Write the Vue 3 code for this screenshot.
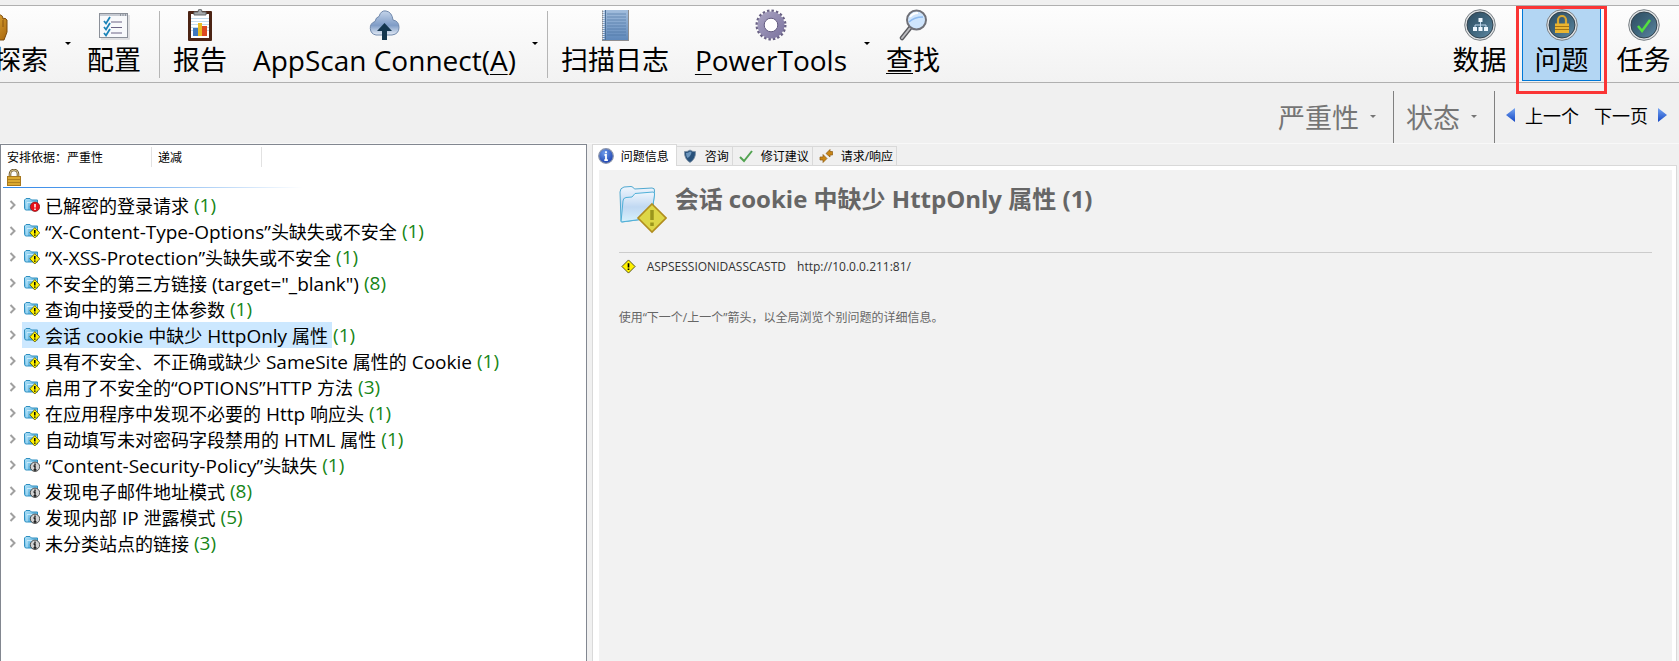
<script setup>
import { ref } from "vue";

const tools = [
    { id: "explore", icon: "hand", label: "探索", menu: true, clipped: true },
    { id: "config", icon: "config", label: "配置", separator: true },
    { id: "report", icon: "report", label: "报告" },
    { id: "connect", icon: "cloud", label: "AppScan Connect(", key: "A", tail: ")", menu: true, separator: true, latin: true },
    { id: "log", icon: "log", label: "扫描日志" },
    { id: "power", icon: "gear", label: "", key: "P", tail: "owerTools", menu: true, latin: true },
    { id: "find", icon: "search", label: "", key: "查", tail: "找" },
];

const views = [
    { id: "data", label: "数据" },
    { id: "issues", label: "问题" },
    { id: "tasks", label: "任务" },
];

const issues = [
    { title: "已解密的登录请求", count: 1, level: "high" },
    { title: "“X-Content-Type-Options”头缺失或不安全", count: 1, level: "low" },
    { title: "“X-XSS-Protection”头缺失或不安全", count: 1, level: "low" },
    { title: "不安全的第三方链接 (target=\"_blank\")", count: 8, level: "low" },
    { title: "查询中接受的主体参数", count: 1, level: "low" },
    { title: "会话 cookie 中缺少 HttpOnly 属性", count: 1, level: "low" },
    { title: "具有不安全、不正确或缺少 SameSite 属性的 Cookie", count: 1, level: "low" },
    { title: "启用了不安全的“OPTIONS”HTTP 方法", count: 3, level: "low" },
    { title: "在应用程序中发现不必要的 Http 响应头", count: 1, level: "low" },
    { title: "自动填写未对密码字段禁用的 HTML 属性", count: 1, level: "low" },
    { title: "“Content-Security-Policy”头缺失", count: 1, level: "info" },
    { title: "发现电子邮件地址模式", count: 8, level: "info" },
    { title: "发现内部 IP 泄露模式", count: 5, level: "info" },
    { title: "未分类站点的链接", count: 3, level: "info" },
];

const tabs = [
    { id: "info", label: "问题信息" },
    { id: "advisory", label: "咨询" },
    { id: "fix", label: "修订建议" },
    { id: "traffic", label: "请求/响应" },
];

const activeView = ref("issues");
const activeTab = ref("info");
const selected = ref(5);

// Latin runs are set one size larger than the Chinese around them
const splitRuns = (text) =>
    (text.match(/[\u3001\u4e00-\u9fff]+|[^\u3001\u4e00-\u9fff]+/g) || []).map((run) => ({
        text: run,
        latin: !/[\u3001\u4e00-\u9fff]/.test(run),
    }));
</script>

<template>
    <div class="app">
        <svg class="sprite" aria-hidden="true">
            <defs>
                <linearGradient id="g-gold" x1="0" y1="0" x2="1" y2="1">
                    <stop offset="0" stop-color="#f0bd45" />
                    <stop offset="1" stop-color="#a8660c" />
                </linearGradient>
                <linearGradient id="g-cloud" x1="0" y1="0" x2="0" y2="1">
                    <stop offset="0" stop-color="#c4d4ea" />
                    <stop offset="0.6" stop-color="#7f9cc6" />
                    <stop offset="1" stop-color="#e3ebf6" />
                </linearGradient>
                <linearGradient id="g-book" x1="0" y1="0" x2="0" y2="1">
                    <stop offset="0" stop-color="#a3bedd" />
                    <stop offset="1" stop-color="#5f88ba" />
                </linearGradient>
                <linearGradient id="g-gear" x1="0" y1="0" x2="1" y2="1">
                    <stop offset="0" stop-color="#a59fbf" />
                    <stop offset="1" stop-color="#8078a2" />
                </linearGradient>
                <linearGradient id="g-ball" x1="0" y1="0" x2="1" y2="1">
                    <stop offset="0" stop-color="#2d4c60" />
                    <stop offset="0.5" stop-color="#3f657c" />
                    <stop offset="1" stop-color="#5f8ba5" />
                </linearGradient>
                <linearGradient id="g-folder" x1="0" y1="0" x2="1" y2="1">
                    <stop offset="0" stop-color="#b5e4fa" />
                    <stop offset="1" stop-color="#2f9bd3" />
                </linearGradient>
                <linearGradient id="g-bigfolder" x1="0" y1="0" x2="0" y2="1">
                    <stop offset="0" stop-color="#f0f6fd" />
                    <stop offset="0.5" stop-color="#c0d8f2" />
                    <stop offset="1" stop-color="#d6f0fc" />
                </linearGradient>
                <linearGradient id="g-arrow" x1="0" y1="0" x2="0" y2="1">
                    <stop offset="0" stop-color="#76a5f2" />
                    <stop offset="1" stop-color="#1548c4" />
                </linearGradient>
                <radialGradient id="g-info" cx="0.4" cy="0.3" r="0.8">
                    <stop offset="0" stop-color="#6d9bea" />
                    <stop offset="1" stop-color="#1236a8" />
                </radialGradient>
            </defs>

            <symbol id="i-hand" viewBox="0 0 32 32">
                <path d="M6 16V8q0-3 3-3t3 3V5q0-3 3-3t3 3v3q1-3 3.500-2t2.500 3v1q2-2 4 1v12l-3 8H12L5 23z" fill="url(#g-gold)" stroke="#7d4a0a" />
                <path d="M12 8v8M18 8v8M24 11v7" stroke="#8a540e" fill="none" />
            </symbol>
            <symbol id="i-config" viewBox="0 0 32 32">
                <path d="M3 30h28V6" fill="none" stroke="#d8d8da" stroke-width="1.500" />
                <rect x="1.500" y="4.500" width="28" height="24" fill="#f8f9fb" stroke="#8b9099" />
                <path d="M2 6h27" stroke="#c6cad2" stroke-width="2" />
                <path d="M22 6h1M24.500 6h1M27 6h1" stroke="#59606b" />
                <path d="M13 13h11M13 18.500h11M13 24h11" stroke="#6c6485" />
                <path d="M6 12l2 2.500L12 8M6 18l2 2.500 4-6.500M6 24l2 2.500 4-6.500" fill="none" stroke="#1b83b8" stroke-width="1.800" />
            </symbol>
            <symbol id="i-report" viewBox="0 0 32 32">
                <rect x="4" y="2" width="24" height="30" rx="1" fill="#4c2414" />
                <rect x="7" y="5" width="18" height="24" fill="#fff" />
                <path d="M7 9.500h18M7 12.500h18M7 15.500h18M7 18.500h18M7 21.500h18" stroke="#c4dced" />
                <path d="M10 6V3h4q0-3 2-3t2 3h4v3z" fill="#a5a8aa" stroke="#65696b" />
                <rect x="9" y="19" width="5" height="8" fill="#3f78be" />
                <rect x="14" y="14" width="4" height="13" fill="#e8bc25" />
                <rect x="18" y="17" width="5" height="10" fill="#dd4a21" />
            </symbol>
            <symbol id="i-cloud" viewBox="0 0 32 32">
                <path d="M8 26a7 7 0 0 1-1-13.500Q8 8 11 7.500 13 1 18 2q6 1 7 9 6 1 6 7.500T24 26z" fill="url(#g-cloud)" stroke="#7189ac" />
                <path d="M14 31V22h-5l7.500-8L24 22h-5v9z" fill="#15374f" />
            </symbol>
            <symbol id="i-log" viewBox="0 0 32 32">
                <rect x="3" y="1" width="27" height="31" fill="#8e8e90" />
                <rect x="4" y="1" width="25" height="30" fill="url(#g-book)" />
                <path d="M8 5h19M8 8h19M8 11h19M8 14h19M8 17h19M8 20h19M8 23h19M8 26h19" stroke="#466e9f" stroke-width="0.600" />
                <path d="M4.500 1v30" stroke="#e9eef5" stroke-width="2" stroke-dasharray="1 1" />
                <path d="M6.500 1v30" stroke="#4e7096" />
            </symbol>
            <symbol id="i-gear" viewBox="0 0 32 32">
                <circle cx="16" cy="16" r="14" fill="none" stroke="#696184" stroke-width="3" stroke-dasharray="2.400 2" />
                <circle cx="16" cy="16" r="10" fill="none" stroke="url(#g-gear)" stroke-width="7" />
                <circle cx="16" cy="16" r="6.800" fill="#fff" stroke="#635b80" />
            </symbol>
            <symbol id="i-search" viewBox="0 0 32 32">
                <path d="M13 19L5 29" stroke="#58585c" stroke-width="4.500" stroke-linecap="round" />
                <path d="M13 19L5 29" stroke="#bdbdc0" stroke-width="2" stroke-linecap="round" />
                <circle cx="19.500" cy="11" r="9.500" fill="#cfe5fc" stroke="#707178" stroke-width="2" />
                <path d="M12 13q5-5 14-5" fill="none" stroke="#8dbaf0" stroke-width="1.500" />
                <path d="M13 8q3-4 8-4" fill="none" stroke="#fff" stroke-width="2" />
            </symbol>

            <symbol id="i-ball" viewBox="0 0 32 32">
                <circle cx="16" cy="16" r="15.300" fill="#dfe2e4" stroke="#777e83" />
                <circle cx="16" cy="16" r="13" fill="url(#g-ball)" stroke="#33434e" />
            </symbol>
            <symbol id="i-data" viewBox="0 0 32 32">
                <use href="#i-ball" />
                <path d="M16.500 11v4M11 20v-4h11v4M16.500 15v5" fill="none" stroke="#bfd7ed" />
                <path d="M14.500 9h4v4h-4zM9 18h4v4H9zM14.500 18h4v4h-4zM20 18h4v4h-4z" fill="#eef7ff" />
            </symbol>
            <symbol id="i-issues" viewBox="0 0 32 32">
                <use href="#i-ball" />
                <path d="M12 15v-4a4 4 0 0 1 8 0v4" fill="none" stroke="#d9a72f" stroke-width="2.200" />
                <rect x="9" y="14.500" width="14" height="9.500" fill="#eab531" />
                <path d="M9 17.500h14M9 20.500h14" stroke="#a37313" />
            </symbol>
            <symbol id="i-tasks" viewBox="0 0 32 32">
                <use href="#i-ball" />
                <path d="M10 17l4 5 8-11" fill="none" stroke="#54e03f" stroke-width="2.500" />
            </symbol>

            <symbol id="i-lock" viewBox="0 0 14 18">
                <path d="M3 9V5a4 4 0 0 1 8 0v4" fill="none" stroke="#6d5b35" stroke-width="2.600" />
                <path d="M3 9V5a4 4 0 0 1 8 0v4" fill="none" stroke="#d6c18a" stroke-width="1" />
                <rect x="0.500" y="7.500" width="13" height="9" fill="#dba931" stroke="#a8781c" />
                <path d="M1 10.500h12M1 13.500h12" stroke="#b08120" />
            </symbol>

            <symbol id="i-folder" viewBox="0 0 16 16">
                <path d="M0.500 11.500V3L2 1.500h4L7.500 3h6v10h-12z" fill="url(#g-folder)" stroke="#2f8fc0" />
                <path d="M3 12.500V5.500h10" fill="none" stroke="#d8f2fe" stroke-width="0.800" />
            </symbol>
            <symbol id="i-high" viewBox="0 0 16 16">
                <use href="#i-folder" />
                <circle cx="11" cy="9.800" r="4.700" fill="#e8101a" stroke="#7c1010" stroke-width="0.700" />
                <path d="M11 7v3.500M11 11.500v1.500" stroke="#fff" stroke-width="1.500" />
            </symbol>
            <symbol id="i-low" viewBox="0 0 16 16">
                <use href="#i-folder" />
                <path d="M10.800 4.600L15.800 9.800 10.800 15 5.800 9.800z" fill="#fff200" stroke="#4f4a09" stroke-width="0.800" />
                <path d="M10.800 7v3.500M10.800 11.500v1.300" stroke="#000" stroke-width="1.500" />
            </symbol>
            <symbol id="i-info" viewBox="0 0 16 16">
                <use href="#i-folder" />
                <circle cx="11" cy="9.800" r="4.700" fill="#d2d2d2" stroke="#444" stroke-width="0.900" />
                <path d="M11 6.500V8M9.500 9H11v4M9.500 13h3" fill="none" stroke="#111" stroke-width="1.300" />
            </symbol>

            <symbol id="t-info" viewBox="0 0 16 16">
                <circle cx="8" cy="8" r="7.300" fill="url(#g-info)" stroke="#8b95ab" stroke-width="1.200" />
                <path d="M8 3.200v2M6.500 7H8v5M6.300 12.200h3.600" fill="none" stroke="#fff" stroke-width="1.800" />
            </symbol>
            <symbol id="t-advisory" viewBox="0 0 16 16">
                <path d="M8 2q3 2 5.500 1.500Q14 11 8 14.500 2 11 2.500 3.500 5 4 8 2z" fill="#28517a" stroke="#7c8fa3" stroke-width="0.800" />
                <path d="M8 3.500q-2 1.500-4 1.500 0 3 1.500 5Q9 8 9.500 4z" fill="#6d96bd" />
            </symbol>
            <symbol id="t-fix" viewBox="0 0 16 16">
                <path d="M2 9l4 4 8-10" fill="none" stroke="#52a351" stroke-width="2" />
            </symbol>
            <symbol id="t-traffic" viewBox="0 0 16 16">
                <path d="M2 9h3V6.500L9 10.500 5 14.500V12H2z" fill="#c98616" stroke="#8c5a0e" stroke-width="0.700" />
                <path d="M14.500 3.500h-2.500V1.500L8 5.500l4 3.500V7h2.500z" fill="#c98616" stroke="#8c5a0e" stroke-width="0.700" />
            </symbol>

            <symbol id="i-bigfolder" viewBox="0 0 48 48">
                <path d="M2 35L1 6q0-4 4-5l7-.500q2 0 3.500 2.500L33 2q3 0 2.500 3L33 32 3 36z" fill="url(#g-bigfolder)" stroke="#51a9d0" />
                <path d="M2 36L4 15q0-3 3-3.500l6-.500 3-3.500L34 6q2 0 1.500 3L32 32z" fill="url(#g-bigfolder)" stroke="#4fb0d8" />
                <path d="M33 18L47 32 33 46 19 32z" fill="#ddd647" stroke="#b08d1e" stroke-width="1.600" />
                <path d="M33 24v10M33 36.500v3.500" stroke="#9b961d" stroke-width="3.500" />
            </symbol>
            <symbol id="i-warning" viewBox="0 0 16 16">
                <path d="M8 1L15 8 8 15 1 8z" fill="#fff200" stroke="#4c4a18" />
                <path d="M8 4.500V9M8 10v1.800" stroke="#000" stroke-width="1.800" />
            </symbol>
        </svg>

        <header class="toolbar">
            <nav class="tools">
                <template v-for="tool in tools" :key="tool.id">
                    <button class="tool" :class="{ clipped: tool.clipped, latin: tool.latin }" type="button">
                        <svg class="tool-icon" aria-hidden="true"><use :href="`#i-${tool.icon}`" /></svg>
                        <span class="tool-label">{{ tool.label }}<u v-if="tool.key">{{ tool.key }}</u>{{ tool.tail }}</span>
                    </button>
                    <button v-if="tool.menu" class="tool-menu" type="button" :aria-label="`${tool.id} menu`">
                        <span class="caret"></span>
                    </button>
                    <span v-if="tool.separator" class="separator"></span>
                </template>
            </nav>
            <nav class="views">
                <button
                    v-for="view in views"
                    :key="view.id"
                    class="view"
                    :class="{ active: activeView === view.id }"
                    type="button"
                    @click="activeView = view.id"
                >
                    <svg class="tool-icon" aria-hidden="true"><use :href="`#i-${view.id}`" /></svg>
                    <span class="tool-label">{{ view.label }}</span>
                    <span v-if="view.id === 'issues'" class="highlight"></span>
                </button>
            </nav>
        </header>

        <div class="filters">
            <button class="filter" type="button">严重性<span class="caret"></span></button>
            <button class="filter" type="button">状态<span class="caret"></span></button>
            <div class="pager">
                <button class="page" type="button">
                    <svg width="9" height="14" aria-hidden="true"><path d="M9 0v14L0 7z" fill="url(#g-arrow)" /></svg>
                    上一个
                </button>
                <button class="page" type="button">
                    下一页
                    <svg width="9" height="14" aria-hidden="true"><path d="M0 0v14l9-7z" fill="url(#g-arrow)" /></svg>
                </button>
            </div>
        </div>

        <main class="content">
            <section class="issues">
                <div class="sort">
                    <button class="sort-by" type="button">安排依据：严重性</button>
                    <button class="sort-order" type="button">递减</button>
                </div>
                <svg class="lock" aria-hidden="true"><use href="#i-lock" /></svg>
                <div class="rule"></div>
                <ul class="tree">
                    <li v-for="(issue, index) in issues" :key="issue.title" class="node">
                        <svg class="chevron" viewBox="0 0 8 10" aria-hidden="true">
                            <path d="M1.500 1l4 4-4 4" fill="none" stroke="#a0a0a0" stroke-width="2" />
                        </svg>
                        <button
                            class="node-title"
                            :class="{ selected: selected === index }"
                            type="button"
                            @click="selected = index"
                        >
                            <svg class="node-icon" aria-hidden="true"><use :href="`#i-${issue.level}`" /></svg>
                            <span><span v-for="(run, n) in splitRuns(issue.title)" :key="n" :class="{ latin: run.latin }">{{ run.text }}</span></span>
                        </button>
                        <span class="count latin">({{ issue.count }})</span>
                    </li>
                </ul>
            </section>

            <section class="details">
                <div class="tabs" role="tablist">
                    <button
                        v-for="tab in tabs"
                        :key="tab.id"
                        class="tab"
                        :class="{ active: activeTab === tab.id }"
                        type="button"
                        role="tab"
                        :aria-selected="activeTab === tab.id"
                        @click="activeTab = tab.id"
                    >
                        <svg class="tab-icon" aria-hidden="true"><use :href="`#t-${tab.id}`" /></svg>
                        {{ tab.label }}
                    </button>
                </div>
                <div class="panel">
                    <article class="issue">
                        <div class="issue-head">
                            <svg class="issue-icon" aria-hidden="true"><use href="#i-bigfolder" /></svg>
                            <h1>会话 cookie 中缺少 HttpOnly 属性 (1)</h1>
                        </div>
                        <div class="issue-row">
                            <svg class="warning" aria-hidden="true"><use href="#i-warning" /></svg>
                            <span>ASPSESSIONIDASSCASTD</span>
                            <span>http://10.0.0.211:81/</span>
                        </div>
                        <p class="hint">使用“下一个/上一个”箭头，以全局浏览个别问题的详细信息。</p>
                    </article>
                </div>
            </section>
        </main>
    </div>
</template>

<style>
body {
    margin: 0;
    background: #f0f0f0;
}
</style>

<style scoped>
.app {
    display: flex;
    flex-direction: column;
    min-height: 100vh;
    padding-top: 5px;
    box-sizing: border-box;
    overflow: hidden;
    background: #f0f0f0;
    color: #000;
    font-family: "Open Sans", "Noto Sans CJK SC", sans-serif;
    font-size: 12px;
}

button {
    margin: 0;
    padding: 0;
    border: 0;
    background: none;
    color: inherit;
    font: inherit;
    white-space: nowrap;
}

svg {
    display: block;
    flex: none;
}

.sprite {
    position: absolute;
    width: 0;
    height: 0;
}

.toolbar {
    display: flex;
    justify-content: space-between;
    height: 76px;
    border-top: 1px solid #b0b0b0;
    border-bottom: 1px solid #b0b0b0;
    background: linear-gradient(#fdfdfd, #f2f2f2);
}

.tools,
.views {
    display: flex;
}

.tool,
.view {
    display: flex;
    flex-direction: column;
    align-items: center;
    padding: 3px 13px 0;
}

.tool.clipped {
    align-items: flex-start;
    width: 82px;
    margin-left: -21px;
    padding-left: 0;
}

.tool.clipped .tool-label {
    align-self: flex-end;
}

.tool-icon {
    width: 32px;
    height: 32px;
}

.tool-label {
    font-size: 27px;
    line-height: 38px;
}

.tool.latin .tool-label {
    font-size: 28px;
}

.tool-label u {
    text-decoration-thickness: 1px;
    text-underline-offset: 3px;
}

.tool-menu {
    display: flex;
    justify-content: center;
    width: 13px;
    padding-top: 36px;
}

.caret {
    border: 3px solid transparent;
    border-top-color: currentColor;
    border-bottom: 0;
}

.separator {
    width: 1px;
    margin: 5px 0 4px 5px;
    background: #b5b5b5;
}

.views {
    gap: 3px;
    margin-right: -4px;
}

.view {
    position: relative;
    box-sizing: border-box;
    width: 79px;
    border: 1px solid transparent;
    border-top: 0;
    padding: 3px 0 0;
    margin-bottom: 1px;
}

.view.active {
    border-color: #0078d7;
    background: #b3d6f3;
}

.highlight {
    position: absolute;
    inset: 0 -7px -14px;
    z-index: 1;
    border: 3px solid #fa3535;
    pointer-events: none;
}

.filters {
    display: flex;
    justify-content: flex-end;
    height: 52px;
    padding: 8px 12px 0 0;
    border-bottom: 1px solid #f8f8f8;
}

.filter {
    display: flex;
    align-items: center;
    gap: 11px;
    padding: 0 17px 2px 12px;
    border-right: 1px solid #808080;
    color: #757575;
    font-size: 27px;
}

.pager {
    display: flex;
    align-items: center;
    gap: 15px;
    padding: 0 0 4px 11px;
}

.page {
    display: flex;
    align-items: center;
    gap: 10px;
    font-size: 18px;
}

.content {
    display: grid;
    grid-template-columns: calc(35% - 1px) 1fr;
    flex: 1;
}

.issues {
    min-width: 0;
    border: 1px solid #828790;
    border-bottom: 0;
    background: #fff;
}

.sort {
    display: flex;
    height: 20px;
    padding: 2px 0;
}

.sort-by,
.sort-order {
    box-sizing: border-box;
    width: 110px;
    padding-left: 6px;
    border-right: 1px solid #e2e2e2;
    text-align: left;
}

.sort-by {
    width: 151px;
}

.lock {
    width: 14px;
    height: 18px;
    margin-left: 6px;
}

.rule {
    width: 300px;
    height: 1px;
    margin: 0 2px;
    background: linear-gradient(to right, #2f86e8, #6aa9ee 40%, #fff);
}

.tree {
    margin: 0;
    padding: 4px 0 0 8px;
    list-style: none;
}

.node {
    display: flex;
    align-items: center;
    height: 26px;
    font-size: 18px;
}

.node .latin {
    font-size: 19px;
}

.chevron {
    width: 8px;
    height: 10px;
    margin-right: 5px;
}

.node-title {
    display: flex;
    align-items: center;
    gap: 5px;
    height: 26px;
    padding: 0 4px 0 2px;
}

.node-title.selected {
    background: #cce8ff;
}

.node-icon {
    width: 16px;
    height: 16px;
}

.count {
    margin-left: 1px;
    color: #168516;
}

.details {
    display: flex;
    flex-direction: column;
    min-width: 0;
    padding: 0 2px 0 5px;
}

.tabs {
    display: flex;
    align-items: flex-end;
    height: 21px;
}

.tab {
    display: flex;
    align-items: center;
    gap: 7px;
    box-sizing: border-box;
    height: 19px;
    padding: 0 3px 0 5px;
    border: 1px solid #d9d9d9;
    border-left: 0;
    border-bottom: 0;
}

.tab.active {
    z-index: 1;
    height: 22px;
    margin-bottom: -1px;
    padding-right: 7px;
    border-left: 1px solid #d9d9d9;
    background: #fff;
}

.tab-icon {
    width: 16px;
    height: 16px;
}

.panel {
    display: flex;
    flex: 1;
    padding: 4px 4px 0 6px;
    border: 1px solid #d9d9d9;
    border-bottom: 0;
    background: #fff;
}

.issue {
    flex: 1;
    padding: 16px 20px;
    background: #f2f2f2;
}

.issue-head {
    display: flex;
    gap: 8px;
    height: 66px;
    border-bottom: 1px solid #ccc;
}

.issue-icon {
    width: 48px;
    height: 48px;
}

h1 {
    margin: 0;
    color: #666;
    font-size: 24px;
    line-height: 26px;
}

.issue-row {
    display: flex;
    align-items: center;
    gap: 11px;
    height: 27px;
    padding-left: 2px;
    color: #333;
}

.warning {
    width: 15px;
    height: 15px;
}

.hint {
    margin: 29px 0 0;
    color: #666;
    line-height: 18px;
}
</style>
